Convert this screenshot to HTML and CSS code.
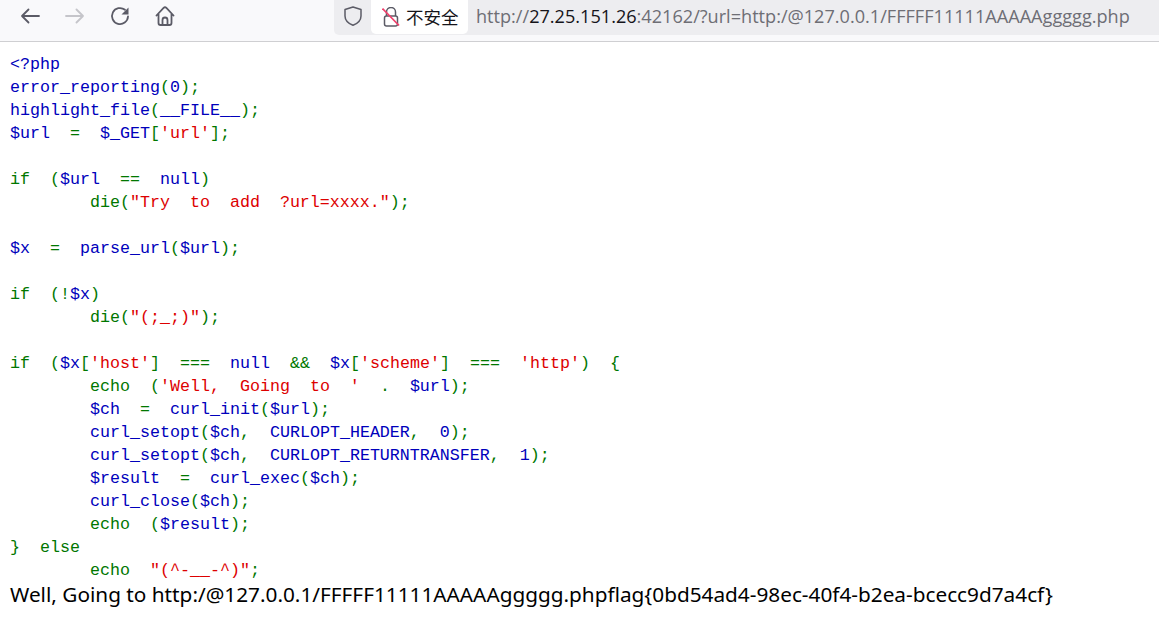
FILE: index.html
```html
<!DOCTYPE html>
<html lang="zh">
<head>
<meta charset="utf-8">
<title>FFFFF11111AAAAAggggg.php</title>
<link rel="stylesheet" href="styles.css">
</head>
<body>
<header class="toolbar">
  <nav class="nav">
    <svg class="icon" viewBox="0 0 20 20"><path d="M19 10H2M8.500 3.500 2 10l6.500 6.500" class="st"/></svg>
    <svg class="icon dim" viewBox="0 0 20 20"><path d="M1 10h17M11.500 3.500 18 10l-6.500 6.500" class="st"/></svg>
    <svg class="icon" viewBox="0 0 20 20"><path d="M18 10.500A8 8 0 1 1 15 3.800" class="st"/><path d="M18.500 1.500v7h-7z" class="fl"/></svg>
    <svg class="icon" viewBox="0 0 20 20"><path d="M1.500 9.500 8.600 1.900a2 2 0 0 1 2.800 0l7.100 7.600M3.500 8v9a2 2 0 0 0 2 2h9a2 2 0 0 0 2-2V8M7.500 19v-5a2.500 2.500 0 0 1 5 0v5" class="st"/></svg>
  </nav>
  <div class="urlbar">
    <svg class="shield" viewBox="0 0 20 20"><path d="M10 1 2 3.500V10c0 4.500 3.500 7.500 8 9.300 4.500-1.800 8-4.800 8-9.300V3.500z" class="sd"/></svg>
    <div class="chip">
      <svg class="lock" viewBox="0 0 18 20"><path d="M4.500 9V5a4.500 4.500 0 0 1 9 0v4" class="sd"/><rect x="2.500" y="9" width="13" height="10" rx="2" class="sd"/><path d="M0.500 1.500 17 18.500" class="slash"/></svg>
      <span class="insecure">不安全</span>
    </div>
    <div class="url">http://<b>27.25.151.26</b>:42162/?url=http:/@127.0.0.1/FFFFF11111AAAAAggggg.php</div>
  </div>
</header>
<main class="page">
<code class="source"><span class="k">&lt;?php</span>
<span class="f">error_reporting</span><span class="g">(</span><span class="f">0</span><span class="g">);</span>
<span class="f">highlight_file</span><span class="g">(</span><span class="f">__FILE__</span><span class="g">);</span>
<span class="f">$url</span>  <span class="g">=</span>  <span class="f">$_GET</span><span class="g">[</span><span class="s">'url'</span><span class="g">];</span>

<span class="g">if</span>  <span class="g">(</span><span class="f">$url</span>  <span class="g">==</span>  <span class="f">null</span><span class="g">)</span>
        <span class="g">die(</span><span class="s">"Try  to  add  ?url=xxxx."</span><span class="g">);</span>

<span class="f">$x</span>  <span class="g">=</span>  <span class="f">parse_url</span><span class="g">(</span><span class="f">$url</span><span class="g">);</span>

<span class="g">if</span>  <span class="g">(!</span><span class="f">$x</span><span class="g">)</span>
        <span class="g">die(</span><span class="s">"(;_;)"</span><span class="g">);</span>

<span class="g">if</span>  <span class="g">(</span><span class="f">$x</span><span class="g">[</span><span class="s">'host'</span><span class="g">]</span>  <span class="g">===</span>  <span class="f">null</span>  <span class="g">&amp;&amp;</span>  <span class="f">$x</span><span class="g">[</span><span class="s">'scheme'</span><span class="g">]</span>  <span class="g">===</span>  <span class="s">'http'</span><span class="g">)</span>  <span class="g">{</span>
        <span class="g">echo</span>  <span class="g">(</span><span class="s">'Well,  Going  to  '</span>  <span class="g">.</span>  <span class="f">$url</span><span class="g">);</span>
        <span class="f">$ch</span>  <span class="g">=</span>  <span class="f">curl_init</span><span class="g">(</span><span class="f">$url</span><span class="g">);</span>
        <span class="f">curl_setopt</span><span class="g">(</span><span class="f">$ch</span><span class="g">,</span>  <span class="f">CURLOPT_HEADER</span><span class="g">,</span>  <span class="f">0</span><span class="g">);</span>
        <span class="f">curl_setopt</span><span class="g">(</span><span class="f">$ch</span><span class="g">,</span>  <span class="f">CURLOPT_RETURNTRANSFER</span><span class="g">,</span>  <span class="f">1</span><span class="g">);</span>
        <span class="f">$result</span>  <span class="g">=</span>  <span class="f">curl_exec</span><span class="g">(</span><span class="f">$ch</span><span class="g">);</span>
        <span class="f">curl_close</span><span class="g">(</span><span class="f">$ch</span><span class="g">);</span>
        <span class="g">echo</span>  <span class="g">(</span><span class="f">$result</span><span class="g">);</span>
<span class="g">}</span>  <span class="g">else</span>
        <span class="g">echo</span>  <span class="s">"(^-__-^)"</span><span class="g">;</span></code>
<p class="output">Well, Going to http:/@127.0.0.1/FFFFF11111AAAAAggggg.phpflag{0bd54ad4-98ec-40f4-b2ea-bcecc9d7a4cf}</p>
</main>
</body>
</html>
```
FILE: styles.css
```css
* { box-sizing: border-box; }
html, body { margin: 0; padding: 0; background: #fff; overflow: hidden; }
body { height: 626px; }

.toolbar {
  display: flex;
  height: 42px;
  background: #f9f9fb;
  border-bottom: 1px solid #cfcfd2;
  align-items: flex-start;
}
.nav {
  display: flex;
  width: 334px;
  gap: 25px;
  padding: 6px 0 0 20px;
  flex: none;
}
.icon { width: 20px; height: 20px; flex: none; }
.dim { opacity: .32; }
.st { fill: none; stroke: #5b5b66; stroke-width: 1.800; stroke-linecap: round; stroke-linejoin: round; }
.fl { fill: #5b5b66; }
.sd { fill: none; stroke: #5b5b66; stroke-width: 1.500; stroke-linejoin: round; }
.slash { stroke: #f0406c; stroke-width: 1.700; fill: none; }

.urlbar {
  flex: 1;
  display: flex;
  align-items: flex-start;
  height: 35px;
  background: #ededf0;
  border-radius: 0 0 0 5px;
  padding-left: 9px;
}
.shield { width: 20px; height: 20px; margin-top: 6px; flex: none; }
.chip {
  display: flex;
  align-items: center;
  gap: 6px;
  width: 97px;
  height: 34px;
  margin-left: 8px;
  padding-left: 11px;
  background: #fff;
  border-radius: 0 0 5px 5px;
  flex: none;
}
.lock { width: 18px; height: 20px; flex: none; }
.insecure { font: 17.500px/20px "Noto Sans CJK SC", sans-serif; color: #15141a; }
.url {
  margin-left: 8px;
  font: 18.130px/33px "Open Sans", sans-serif;
  color: #6e6e75;
  white-space: nowrap;
}
.url b { font-weight: 400; color: #15141a; }

.page { padding: 11px 0 0 10px; }
.source {
  display: block;
  font: 16.670px/23px "Liberation Mono", monospace;
  white-space: pre;
}
.k, .f { color: #0000bb; }
.g { color: #007700; }
.s { color: #dd0000; }
.output {
  margin: 0;
  font: 20.780px/24px "Noto Sans", sans-serif;
  color: #000;
  white-space: nowrap;
}
```
